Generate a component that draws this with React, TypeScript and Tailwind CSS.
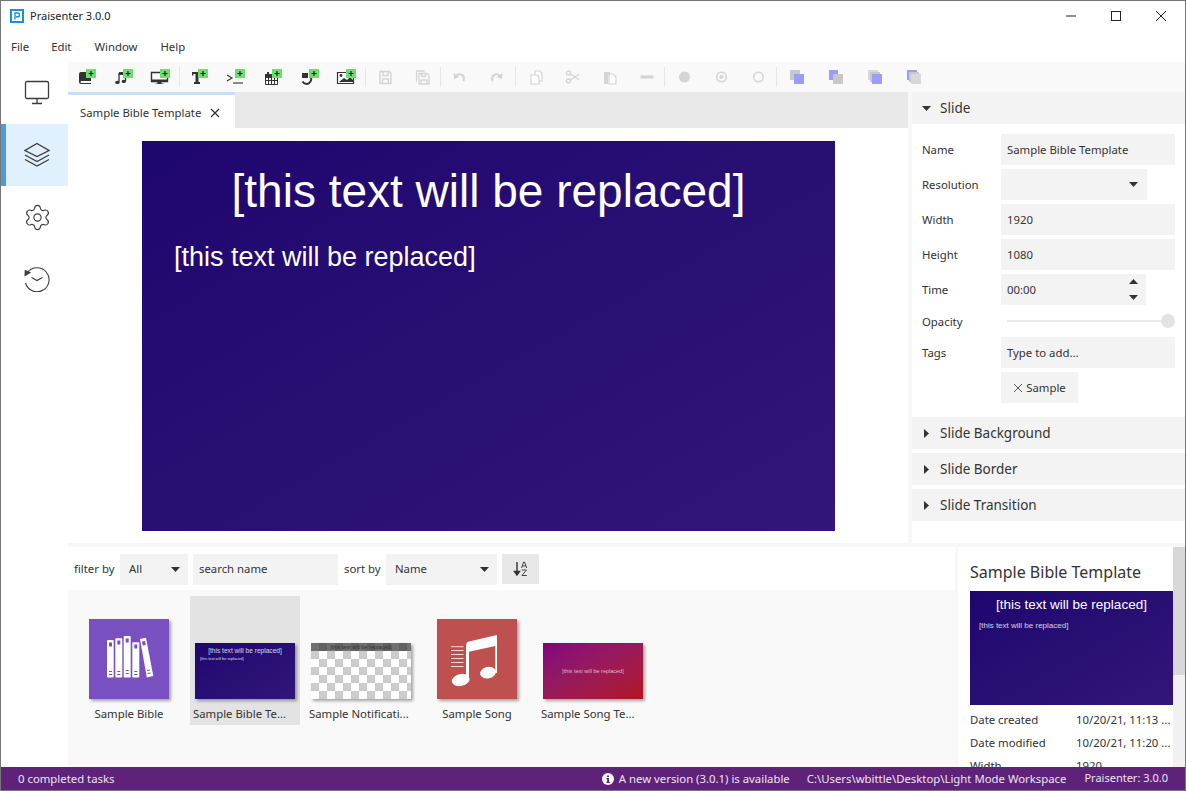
import React from "react";
import { Settings } from "lucide-react";

const font = "font-['Noto_Sans',sans-serif]";

function Add({ children }: { children: React.ReactNode }) {
  return (
    <svg width="21" height="16" viewBox="0 0 21 16">
      <g fill="#333" stroke="#333">{children}</g>
      <rect x="10" y="0" width="10" height="9" fill="#6fdc6f" />
      <path d="M15 2v5M12.5 4.500h5" stroke="#222" strokeWidth="1.2" />
    </svg>
  );
}

function Dim({ children }: { children: React.ReactNode }) {
  return (
    <svg width="21" height="16" viewBox="0 0 21 16">
      {children}
    </svg>
  );
}

const icons: React.ReactNode[] = [
  <Add><path d="M3 5a2 2 0 0 1 2-2h7v9H5.500a1 1 0 0 0 0 2H15v1H5a2 2 0 0 1-2-2z" stroke="none" /><path d="M12 6h3v6h-3z" stroke="none" /></Add>,
  <Add><path d="M6 4v9M12.500 6v6" fill="none" strokeWidth="1.300" /><ellipse cx="4.400" cy="13.400" rx="2.200" ry="1.600" stroke="none" /><ellipse cx="10.800" cy="12.400" rx="2.200" ry="1.600" stroke="none" /><path d="M6 3h7v3H6z" stroke="none" /></Add>,
  <Add><path d="M1.500 3.500h16v9h-16z" fill="none" strokeWidth="1.400" /><path d="M1 10.500h17V13H1zM7.500 13h4v1.500h2V15h-8v-.5h2z" stroke="none" /></Add>,
  <Add><path d="M4 3h10v3.500h-1.400V5H10.500v8H12v2H6v-2h1.500V5H5.400v1.500H4z" stroke="none" /></Add>,
  <Add><path d="M2 6l5 3-5 3" fill="none" strokeWidth="1.100" /><path d="M8 14h10" fill="none" strokeWidth="1.100" /></Add>,
  <Add><path d="M3.500 5.500h12v10h-12z" fill="none" /><path d="M3.500 8.500h12M3.500 11.500h12M6.500 6v9M9.500 6v9M12.500 6v9" fill="none" /><path d="M5 3h2v3H5zM3 5h9v3H3z" stroke="none" /></Add>,
  <Add><path d="M11.500 7.500a5 5 0 0 1-3.500 7.500 5 5 0 0 1-4.500-2.500" fill="none" strokeWidth="2" /><path d="M3 4h6v5H3z" stroke="none" /></Add>,
  <Add><path d="M1.500 3.500h16v11h-16z" fill="none" strokeWidth="1.200" /><path d="M3 13l5-4 3 2 3-3 3 3v2z" stroke="none" /><circle cx="5" cy="6.500" r="1.400" stroke="none" /></Add>,
  <Dim><g fill="none" stroke="#d4d4d4" strokeWidth="1.400"><path d="M5 2.500h9l2 2v10H5z" /><path d="M8 2.500v4h5v-4M7.500 14.500v-4.500h6v4.500" /></g></Dim>,
  <Dim><g fill="none" stroke="#d4d4d4" strokeWidth="1.300"><path d="M7 4.500h8l2 2v8.500H7z" /><path d="M9.500 4.500v3h4v-3M9 15v-4h6v4M4.500 12.500V2h8" /></g></Dim>,
  <Dim><g fill="none" stroke="#d4d4d4" strokeWidth="2"><path d="M7 7a4.500 4.500 0 0 1 8 2.500c0 1-.3 2-.8 2.600" /></g><path d="M4.500 4l.5 6 5-2z" fill="#d4d4d4" /></Dim>,
  <Dim><g fill="none" stroke="#d4d4d4" strokeWidth="2"><path d="M14 7a4.500 4.500 0 0 0-8 2.500c0 1 .3 2 .8 2.600" /></g><path d="M16.500 4l-.5 6-5-2z" fill="#d4d4d4" /></Dim>,
  <Dim><g fill="#fff" stroke="#d4d4d4" strokeWidth="1.200"><path d="M9 2h5l2 2v8H9z" /><path d="M5 6h6l2 2v7H5z" /></g></Dim>,
  <Dim><g fill="none" stroke="#d4d4d4" strokeWidth="1.300"><circle cx="5.500" cy="4" r="2" /><circle cx="5.500" cy="12" r="2" /><path d="M7.500 5l9 6M7.500 11l9-6" /></g></Dim>,
  <Dim><path d="M4 3h6v3h-2v9H4z" fill="#d4d4d4" /><path d="M9 5h4l3 3v7H9z" fill="#fff" stroke="#d4d4d4" strokeWidth="1.200" /></Dim>,
  <Dim><rect x="3.500" y="6.500" width="13" height="3" fill="#d4d4d4" /></Dim>,
  <Dim><circle cx="10.500" cy="8" r="5.500" fill="#d4d4d4" /></Dim>,
  <Dim><circle cx="10.500" cy="8" r="4.800" fill="none" stroke="#d4d4d4" strokeWidth="1.500" /><circle cx="10.500" cy="8" r="2" fill="#d4d4d4" /></Dim>,
  <Dim><circle cx="10.500" cy="8" r="4.800" fill="none" stroke="#d4d4d4" strokeWidth="1.500" /></Dim>,
  <Dim><rect x="3" y="1" width="10" height="10" fill="#c8c8c8" /><rect x="7" y="5" width="10" height="10" fill="#9d9bff" /></Dim>,
  <Dim><rect x="3" y="1" width="9" height="10" fill="#9d9bff" /><rect x="7" y="5" width="10" height="10" fill="#c8c8c8" /></Dim>,
  <Dim><rect x="3" y="1" width="10" height="10" fill="#d8d8d8" /><rect x="5" y="3" width="10" height="10" fill="#c8c8c8" /><rect x="7" y="5" width="10" height="10" fill="#9d9bff" /></Dim>,
  <Dim><rect x="3" y="1" width="10" height="10" fill="#9d9bff" /><rect x="5" y="3" width="10" height="10" fill="#c8c8c8" /><rect x="7" y="5" width="10" height="10" fill="#d8d8d8" /></Dim>,
];

const groups: { from: number; to: number; cell: string }[] = [
  { from: 0, to: 3, cell: "w-[37px]" },
  { from: 3, to: 8, cell: "w-[37px]" },
  { from: 8, to: 10, cell: "w-[37px] pl-[2px]" },
  { from: 10, to: 12, cell: "w-[37px]" },
  { from: 12, to: 16, cell: "w-[37px] pl-[3px]" },
  { from: 16, to: 19, cell: "w-[37px] pl-[1px]" },
  { from: 19, to: 23, cell: "w-[39px] pl-[2px]" },
];

function Toolbar() {
  return (
    <div className="flex h-[30px] items-center bg-[#f9f9f9]">
      {groups.map((gr, g) => (
        <React.Fragment key={g}>
          {g > 0 && <div className="h-[20px] w-px shrink-0 bg-[#e6e6e6]" />}
          {icons.slice(gr.from, gr.to).map((ic, i) => (
            <div key={i} className={`flex shrink-0 justify-center ${gr.cell}`}>
              {ic}
            </div>
          ))}
        </React.Fragment>
      ))}
    </div>
  );
}

function Caret({ className = "" }: { className?: string }) {
  return (
    <svg width="9" height="5" viewBox="0 0 9 5" className={className}>
      <path d="M0 0h9L4.500 5z" fill="#333" />
    </svg>
  );
}

function NavIcon({ children, active }: { children: React.ReactNode; active?: boolean }) {
  return (
    <div className={`flex h-[62px] items-center justify-center border-l-[5px] ${active ? "border-[#4a9de2] bg-[#e1f0fd]" : "border-transparent"}`}>
      {children}
    </div>
  );
}

function Sidebar() {
  return (
    <div className="flex w-[67px] shrink-0 flex-col">
      <NavIcon>
        <svg width="26" height="26" viewBox="0 0 26 26" fill="none" stroke="#3c3c3c" strokeWidth="1.300">
          <rect x="1.500" y="1.500" width="23" height="17" rx="1.500" />
          <path d="M13 18.500v5M8 23.500h10" />
        </svg>
      </NavIcon>
      <NavIcon active>
        <svg width="26" height="26" viewBox="0 0 26 26" fill="none" stroke="#3c3c3c" strokeWidth="1.300">
          <path d="M13 1.500L25 8.500 13 14.500 1 8.500z" />
          <path d="M1 13l12 6.500L25 13M1 17.500l12 6.500 12-6.500" />
        </svg>
      </NavIcon>
      <NavIcon>
        <Settings size={29} strokeWidth={0.95} color="#3c3c3c" />
      </NavIcon>
      <NavIcon>
        <svg width="26" height="26" viewBox="0 0 26 26" fill="none" stroke="#3c3c3c" strokeWidth="1.100">
          <path d="M3.500 6.500A12 12 0 1 1 1.500 17" />
          <path d="M1 9.500l.3-5 4.700 2z" fill="#3c3c3c" />
          <path d="M7.500 11.500l5.500 3 5.500-3" />
        </svg>
      </NavIcon>
    </div>
  );
}

function Field({ children, label, w = "w-full" }: { children: React.ReactNode; label: string; w?: string }) {
  return (
    <div className="flex h-[31px] items-center">
      <div className="w-[79px] shrink-0 text-[#333]">{label}</div>
      <div className={`flex h-full items-center justify-between bg-[#f3f3f3] px-[6px] text-[#333] ${w}`}>{children}</div>
    </div>
  );
}

function SectionHead({ title, open }: { title: string; open?: boolean }) {
  return (
    <div className="flex h-[32px] shrink-0 items-center bg-[#f3f3f3] pl-[10px] text-[13.500px] text-[#333]">
      {open ? (
        <Caret className="mr-[9px]" />
      ) : (
        <svg width="5" height="9" viewBox="0 0 5 9" className="ml-[2px] mr-[11px]">
          <path d="M0 0l5 4.500L0 9z" fill="#333" />
        </svg>
      )}
      {title}
    </div>
  );
}

function RightPanel() {
  return (
    <div className="flex w-[277px] shrink-0 flex-col border-l-[4px] border-[#f7f7f7] bg-white text-[11.350px]">
      <SectionHead title="Slide" open />
      <div className="flex flex-col gap-[4px] px-[10px] pb-[14px] pt-[10px]">
        <Field label="Name">Sample Bible Template</Field>
        <Field label="Resolution" w="w-[146px]">
          <span />
          <Caret className="mr-[3px]" />
        </Field>
        <Field label="Width">1920</Field>
        <Field label="Height">1080</Field>
        <Field label="Time" w="w-[145px]">
          00:00
          <span className="mr-[2px] flex flex-col gap-[11px]">
            <Caret className="rotate-180" />
            <Caret />
          </span>
        </Field>
        <div className="flex h-[24px] items-center">
          <div className="w-[79px] shrink-0 pt-[1px] text-[#333]">Opacity</div>
          <div className="relative ml-[6px] h-[2px] flex-1 bg-[#ebebeb]">
            <div className="absolute right-0 top-[-6px] size-[14px] rounded-full bg-[#e3e3e3]" />
          </div>
        </div>
        <Field label="Tags">Type to add...</Field>
        <div className="pl-[79px]">
          <div className="flex h-[31px] w-[77px] items-center justify-center gap-[3px] bg-[#f3f3f3] text-[#333]">
            <svg width="10" height="10" viewBox="0 0 10 10" stroke="#444" strokeWidth="0.900">
              <path d="M1 1l8 8M9 1l-8 8" />
            </svg>
            Sample
          </div>
        </div>
      </div>
      <div className="flex flex-col gap-[4px]">
        <SectionHead title="Slide Background" />
        <SectionHead title="Slide Border" />
        <SectionHead title="Slide Transition" />
      </div>
    </div>
  );
}

function Editor() {
  return (
    <div className="flex min-w-0 flex-1 flex-col">
      <div className="flex h-[36px] shrink-0 bg-[#e9e9e9]">
        <div className="flex w-[167px] items-center gap-[9px] border-t-[3px] border-[#c3e1fb] bg-white pl-[12px] pt-[3px] text-[11.350px] text-[#333]">
          Sample Bible Template
          <svg width="10" height="10" viewBox="0 0 10 10" stroke="#333" strokeWidth="1.200">
            <path d="M1 1l8 8M9 1l-8 8" />
          </svg>
        </div>
      </div>
      <div className="flex-1 pl-[74px] pt-[13px]">
        <div className="h-[390px] w-[693px] bg-gradient-to-br from-[#1e066f] to-[#321679] font-['Liberation_Sans',sans-serif] text-white">
          <div className="pt-[20px] text-center text-[46px] leading-[60px]">[this text will be replaced]</div>
          <div className="pl-[32px] pt-[17px] text-[27px] leading-[38px]">[this text will be replaced]</div>
        </div>
      </div>
    </div>
  );
}

function Tile({ name, selected, long, children }: { name: string; selected?: boolean; long?: boolean; children: React.ReactNode }) {
  return (
    <div className={`flex h-[129px] w-[110px] shrink-0 flex-col items-center ${selected ? "bg-[#e3e3e3]" : ""}`}>
      <div className="flex h-[103px] items-end">{children}</div>
      <div className={`mt-[7px] w-full whitespace-nowrap text-[11.350px] leading-[16px] text-[#333] ${long ? "pl-[3px] text-left" : "text-center"}`}>{name}</div>
    </div>
  );
}

const shadow = "shadow-[2px_2px_3px_rgba(0,0,0,0.35)]";

function Library() {
  return (
    <div className="flex h-[177px] gap-[6px] bg-[#f9f9f9] pl-[6px] pt-[6px]">
      <Tile name="Sample Bible">
        <div className={`size-[80px] bg-[#7950bf] ${shadow}`}>
          <svg width="80" height="80" viewBox="0 0 80 80">
            <g fill="#fff">
              <rect x="18" y="21" width="6.700" height="37.500" rx="0.800" />
              <rect x="26.300" y="19.300" width="7" height="39.200" rx="0.800" />
              <rect x="34.700" y="17" width="7" height="41.500" rx="0.800" />
              <rect x="43.300" y="23.300" width="7" height="35.200" rx="0.800" />
              <path d="M51 20l6-1.300 7.300 38.300-6.500 1.500z" />
            </g>
            <g fill="#7950bf">
              <rect x="20" y="23.500" width="3" height="4" />
              <rect x="28.300" y="21.500" width="3" height="4" />
              <rect x="36.700" y="19.500" width="3" height="4" />
              <rect x="45.300" y="25.500" width="3" height="4" />
              <path d="M53 22.500l3-.6.800 4-3 .6z" />
              <rect x="20" y="52" width="3" height="1" />
              <rect x="20" y="55" width="3" height="1" />
              <rect x="28.300" y="52" width="3" height="1" />
              <rect x="28.300" y="55" width="3" height="1" />
              <rect x="36.700" y="51" width="3" height="1" />
              <rect x="36.700" y="54" width="3" height="1" />
              <rect x="45.300" y="52" width="3" height="1" />
              <rect x="45.300" y="55" width="3" height="1" />
              <path d="M58 51l3-.6.200 1-3 .6zM58.500 54l3-.6.200 1-3 .6z" />
            </g>
          </svg>
        </div>
      </Tile>
      <Tile name="Sample Bible Te..." selected long>
        <div className={`h-[56px] w-[100px] bg-gradient-to-br from-[#1e066f] to-[#321679] font-['Liberation_Sans',sans-serif] text-white ${shadow}`}>
          <div className="pt-[3px] text-center text-[6.600px] leading-[9px] opacity-80">[this text will be replaced]</div>
          <div className="pl-[5px] pt-[1px] text-[3.900px] leading-[6px] opacity-80">[this text will be replaced]</div>
        </div>
      </Tile>
      <Tile name="Sample Notificati..." long>
        <div className={`h-[56px] w-[100px] ${shadow}`}>
          <svg width="100" height="56" viewBox="0 0 100 56">
            <defs>
              <pattern id="chk" width="16" height="16" patternUnits="userSpaceOnUse">
                <rect width="16" height="16" fill="#fff" />
                <rect x="8" width="8" height="8" fill="#cccccc" />
                <rect y="8" width="8" height="8" fill="#cccccc" />
              </pattern>
            </defs>
            <rect width="100" height="56" fill="url(#chk)" />
            <rect width="100" height="8" fill="#333" opacity="0.7" />
            <text x="50" y="6" textAnchor="middle" fontSize="5.500" fontFamily="Liberation Sans" fill="#333">[this text will be replaced]</text>
          </svg>
        </div>
      </Tile>
      <Tile name="Sample Song">
        <div className={`size-[80px] bg-[#be5050] ${shadow}`}>
          <svg width="80" height="80" viewBox="0 0 80 80">
            <g fill="#fff">
              <path d="M29 27.500c0-3 1-4.500 3-5L60 16v38h-1.700V27L32 32.700V61h-3z" />
              <ellipse cx="23.700" cy="61" rx="9" ry="6" transform="rotate(-12 23.700 61)" />
              <ellipse cx="51" cy="53.700" rx="8" ry="5.700" transform="rotate(-12 51 53.700)" />
            </g>
            <path d="M14 27.700h12.500M14 31.500h12.500M14 35.500h12.500M14 39.500h12.500M14 43.500h12.500M14 47.500h12.500" stroke="#fff" strokeOpacity="0.800" />
          </svg>
        </div>
      </Tile>
      <Tile name="Sample Song Te..." long>
        <div className={`flex h-[56px] w-[100px] items-center justify-center bg-gradient-to-br from-[#830080] to-[#b2141e] font-['Liberation_Sans',sans-serif] text-[5.500px] text-white/70 ${shadow}`}>
          [this text will be replaced]
        </div>
      </Tile>
    </div>
  );
}

function Box({ w, children }: { w: string; children: React.ReactNode }) {
  return <div className={`flex h-[31px] shrink-0 items-center justify-between bg-[#f3f3f3] px-[6px] ${w}`}>{children}</div>;
}

function Browser() {
  return (
    <div className="flex min-w-0 flex-1 flex-col">
      <div className="flex h-[43px] items-center bg-white pl-[6px] pt-[1px] text-[11.350px] text-[#333]">
        <span className="w-[46px] shrink-0">filter by</span>
        <Box w="w-[68px]">
          <span className="pl-[3px]">All</span>
          <Caret className="mr-[2px]" />
        </Box>
        <div className="w-[5px]" />
        <Box w="w-[145px]">search name</Box>
        <span className="w-[48px] shrink-0 pl-[6px]">sort by</span>
        <Box w="w-[111px]">
          <span className="pl-[3px]">Name</span>
          <Caret className="mr-[2px]" />
        </Box>
        <div className="w-[5px]" />
        <div className="flex h-[30px] w-[37px] items-center justify-center bg-[#e8e8e8]">
          <svg width="16" height="16" viewBox="0 0 16 16">
            <path d="M4 1v12M1.500 10.500L4 14l2.500-3.500z" stroke="#333" strokeWidth="1.400" fill="#333" />
            <path d="M8.500 7l2.200-6h.8l2.200 6M9.300 5h3.600" stroke="#444" fill="none" />
            <path d="M8.800 9h4.600L9 14.500h4.800" stroke="#444" fill="none" />
          </svg>
        </div>
      </div>
      <Library />
    </div>
  );
}

function Details() {
  return (
    <div className="flex w-[230px] shrink-0 border-l-[3px] border-[#f7f7f7] bg-white text-[11.350px] text-[#333]">
      <div className="w-[215px] min-w-0 overflow-hidden pl-[12px]">
        <div className="pt-[12px] text-[16px] leading-[26px]">Sample Bible Template</div>
        <div className="mt-[6px] h-[114px] w-[203px] bg-gradient-to-br from-[#1e066f] to-[#321679] font-['Liberation_Sans',sans-serif] text-white">
          <div className="pt-[6px] text-center text-[13.500px] leading-[16px]">[this text will be replaced]</div>
          <div className="pl-[9px] pt-[8px] text-[8px] leading-[10px] opacity-80">[this text will be replaced]</div>
        </div>
        <div className="mt-[3px] flex flex-col">
          {[["Date created", "10/20/21, 11:13 ..."], ["Date modified", "10/20/21, 11:20 ..."], ["Width", "1920"]].map(([k, v]) => (
            <div key={k} className="flex h-[23px] items-center">
              <span className="w-[106px] shrink-0">{k}</span>
              <span className="whitespace-nowrap">{v}</span>
            </div>
          ))}
        </div>
      </div>
      <div className="w-[12px] shrink-0 bg-[#f1f1f1]">
        <div className="h-[128px] bg-[#d7d7d7]" />
      </div>
    </div>
  );
}

export default function App() {
  return (
    <div className={`flex h-[791px] w-[1186px] flex-col overflow-hidden border border-[#767676] bg-white ${font}`}>
      <div className="flex h-[30px] shrink-0 items-center pl-[9px] text-[11px] text-[#222]">
        <svg width="14" height="14" viewBox="0 0 14 14">
          <rect width="14" height="14" fill="#1c8fd6" />
          <rect x="2" y="2" width="10" height="10" fill="#fff" />
          <path d="M5 10.500V4h2.600a1.800 1.800 0 0 1 0 3.800H6" fill="none" stroke="#1c8fd6" strokeWidth="1.400" />
        </svg>
        <span className="ml-[6px]">Praisenter 3.0.0</span>
        <div className="ml-auto flex h-full pr-[2px]">
          {[
            <path key="a" d="M0 5h10" />,
            <rect key="b" x="0.500" y="0.500" width="9" height="9" />,
            <path key="c" d="M0 0l10 10M10 0L0 10" />,
          ].map((p, i) => (
            <div key={i} className="flex w-[45px] items-center justify-center">
              <svg width="10" height="10" viewBox="0 0 10 10" fill="none" stroke="#222">
                {p}
              </svg>
            </div>
          ))}
        </div>
      </div>
      <div className="flex h-[31px] shrink-0 items-center gap-[22px] pl-[10px] text-[11.350px] text-[#333]">
        <span>File</span>
        <span>Edit</span>
        <span className="ml-[1px]">Window</span>
        <span className="ml-[1px]">Help</span>
      </div>
      <div className="flex min-h-0 flex-1">
        <Sidebar />
        <div className="flex min-w-0 flex-1 flex-col">
          <Toolbar />
          <div className="flex h-[451px] shrink-0">
            <Editor />
            <RightPanel />
          </div>
          <div className="h-[4px] shrink-0 bg-[#f7f7f7]" />
          <div className="flex min-h-0 flex-1">
            <Browser />
            <Details />
          </div>
        </div>
      </div>
      <div className="relative z-10 flex h-[23px] shrink-0 items-center bg-[#5f2279] px-[17px] text-[11.350px] text-[#ece4f0]">
        <span>0 completed tasks</span>
        <svg width="12" height="12" viewBox="0 0 12 12" className="ml-auto mr-[5px]">
          <circle cx="6" cy="6" r="6" fill="#fff" />
          <path d="M5 2.500h2v1.500H5zM4.500 5h2.500v3.500h.700V10h-3.200V8.500h.700V6.500h-.700z" fill="#5f2279" />
        </svg>
        <span>A new version (3.0.1) is available</span>
        <span className="ml-[17px]">C:\Users\wbittle\Desktop\Light Mode Workspace</span>
        <span className="ml-[18px] text-[11px]">Praisenter: 3.0.0</span>
      </div>
    </div>
  );
}
